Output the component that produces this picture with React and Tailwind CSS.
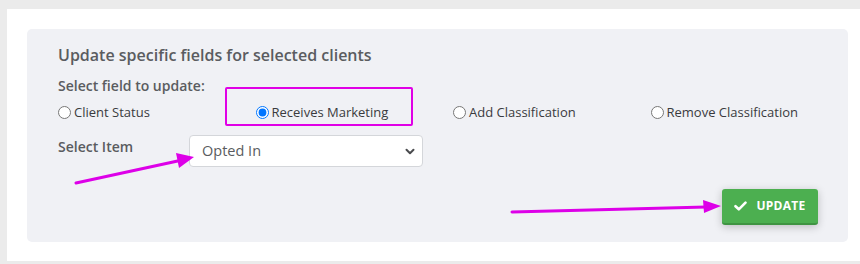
import React from "react";

export default function App() {
  const font = { fontFamily: '"Open Sans", "Noto Sans", sans-serif' };
  return (
    <div className="relative w-[860px] h-[264px] bg-[#ebebeb] pt-[9px] pl-[7px] pb-[3px] overflow-hidden" style={font}>
      <div className="bg-white h-[252px] pt-[20px] pl-[20px] pr-[12px]">
        <div className="relative h-[213px] rounded-[5px] bg-[#f0f1f5] pl-[31px] pt-[14px] pr-[30px]">
          <div className="text-[16px] leading-[24px] font-semibold text-[#5a5c60]">
            Update specific fields for selected clients
          </div>
          <div className="mt-[9px] text-[14px] leading-[20px] font-semibold text-[#5a5c60]">
            Select field to update:
          </div>
          <div className="relative mt-[7px] grid grid-cols-4 w-[790px] text-[13px] leading-[18px] text-[#3a3b3e]">
            {[
              ["Client Status", false],
              ["Receives Marketing", true],
              ["Add Classification", false],
              ["Remove Classification", false],
            ].map(([label, checked]) => (
              <label key={label} className="flex items-center gap-[3px]">
                <input type="radio" name="field" defaultChecked={checked} className="m-0 w-[13px] h-[13px]" />
                <span>{label}</span>
              </label>
            ))}
            <div className="absolute left-[167px] top-[-16px] w-[188px] h-[39px] border-2 border-[#e000e6] rounded-[2px]" />
          </div>
          <div className="mt-[14px] flex items-start">
            <div className="w-[131px] pt-[2px] text-[14px] leading-[20px] font-semibold text-[#5a5c60]">Select Item</div>
            <div className="relative w-[234px] h-[32px] bg-white border border-[#d4d6da] rounded-[4px] flex items-center pl-[12px] text-[14.5px] text-[#5a5c60]">
              Opted In
              <svg className="absolute right-[7px] top-[12px]" width="10" height="8" viewBox="0 0 10 8">
                <path d="M1.5 1.8 L5 5.3 L8.5 1.8" fill="none" stroke="#4a4b4e" strokeWidth="2" strokeLinecap="round" strokeLinejoin="round" />
              </svg>
            </div>
          </div>
          <div className="mt-[22px] flex justify-end">
            <button className="w-[96px] h-[36px] rounded-[3px] bg-[#4caf50] border-b-2 border-[#3f9442] shadow-[0_2px_8px_rgba(0,0,0,0.22)] flex items-center justify-center gap-[9px] text-white text-[12px] font-bold tracking-[0.3px]">
              <svg width="13" height="10" viewBox="0 0 13 10">
                <path d="M1.5 5.2 L4.8 8.3 L11.5 1.6" fill="none" stroke="white" strokeWidth="2.6" strokeLinecap="round" strokeLinejoin="round" />
              </svg>
              UPDATE
            </button>
          </div>
        </div>
      </div>
      <svg className="absolute left-0 top-0 pointer-events-none" width="860" height="264">
        <line x1="76" y1="183" x2="180" y2="160.5" stroke="#dd00e8" strokeWidth="3" strokeLinecap="round" />
        <polygon points="194,157 176,153 179,168" fill="#dd00e8" />
        <line x1="512" y1="212" x2="706" y2="207" stroke="#dd00e8" strokeWidth="3" strokeLinecap="round" />
        <polygon points="721,206 703,200 704,213" fill="#dd00e8" />
      </svg>
    </div>
  );
}
